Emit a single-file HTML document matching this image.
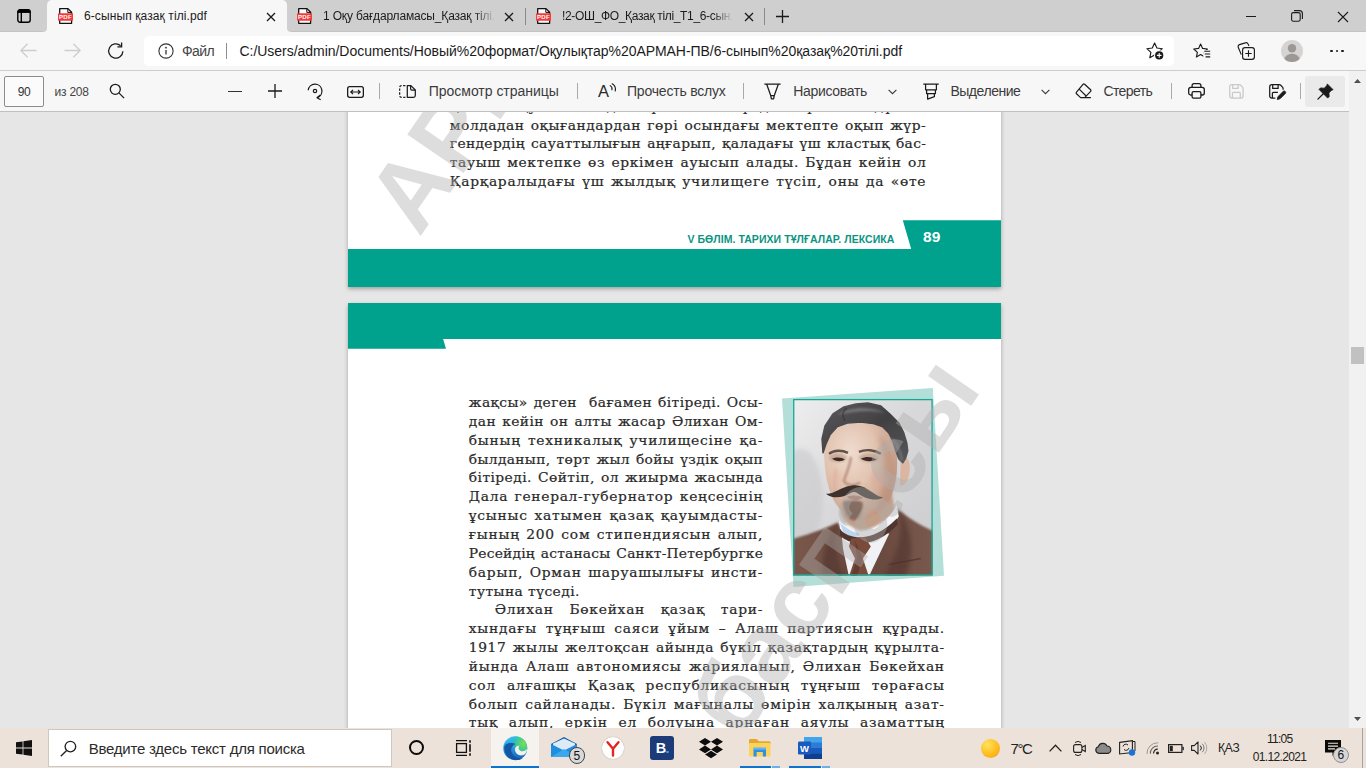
<!DOCTYPE html>
<html lang="kk">
<head>
<meta charset="utf-8">
<title>6-сынып қазақ тілі.pdf</title>
<style>
*{box-sizing:border-box;margin:0;padding:0}
html,body{width:1366px;height:768px;overflow:hidden;background:#e6e6e6}
body{position:relative;font-family:"Liberation Sans","DejaVu Sans",sans-serif;color:#1b1b1b}
.abs{position:absolute}
.t{position:absolute;white-space:nowrap;line-height:1}
svg{position:absolute;overflow:visible}
#tabbar{position:absolute;left:0;top:0;width:1366px;height:32px;background:#cfcfcf}
#tab1{position:absolute;left:47px;top:0;width:240px;height:32px;background:#f7f7f7;border-radius:5px 5px 0 0}
#navbar{position:absolute;left:0;top:32px;width:1366px;height:39px;background:#f7f7f7;border-bottom:1px solid #cdcdcd}
#addr{position:absolute;left:144px;top:4px;width:1030px;height:30px;background:#fff;border-radius:5px}
#pdfbar{position:absolute;left:0;top:71px;width:1349px;height:41px;background:#f7f7f7;border-bottom:1px solid #c0c0c0}
#view{position:absolute;left:0;top:112px;width:1349px;height:616px;background:#e6e6e6;overflow:hidden}
#scroll{position:absolute;left:1349px;top:71px;width:17px;height:657px;background:#f1f1f1}
.page{position:absolute;left:348px;width:653px;background:#fff;overflow:hidden;box-shadow:0 2px 4px rgba(0,0,0,.3)}
.ln{position:absolute;font-family:"DejaVu Serif","Liberation Serif",serif;font-size:13.8px;line-height:1;color:#2a2a2a;text-align:justify;text-align-last:justify;white-space:nowrap;letter-spacing:.45px;-webkit-text-stroke:.22px #2a2a2a}
#task{position:absolute;left:0;top:728px;width:1366px;height:40px;background:#ece2d9}
</style>
</head>
<body>
<div id="tabbar">
<div id="tab1"></div>
<svg style="left:43px;top:28px" width="4" height="4"><path d="M4 0v4H0A4 4 0 0 0 4 0z" fill="#f7f7f7"/></svg>
<svg style="left:287px;top:28px" width="4" height="4"><path d="M0 0v4h4A4 4 0 0 1 0 0z" fill="#f7f7f7"/></svg>
<div class="abs" style="left:0;top:31px;width:43px;height:1px;background:#c4c4c4"></div>
<div class="abs" style="left:291px;top:31px;width:1075px;height:1px;background:#c4c4c4"></div>
<svg style="left:17px;top:9px" width="14" height="14" viewBox="0 0 14 14"><rect x=".8" y=".8" width="12.4" height="12.4" rx="2.3" fill="none" stroke="#000" stroke-width="1.4"/><path d="M.8 3.4V3A2.2 2.2 0 0 1 3 .8H11A2.2 2.2 0 0 1 13.2 3V3.4z" fill="#000" stroke="#000" stroke-width="1"/><path d="M4.3 3v10.4" stroke="#000" stroke-width="1.4"/></svg>
<svg style="left:58px;top:8px" width="15" height="16" viewBox="0 0 15 16"><path d="M1.7 .65h8.3l3.6 3.6v11.1H1.7z" fill="#fff" stroke="#111" stroke-width="1.3" stroke-linejoin="round"/><path d="M9.8 .8v3.6h3.6" fill="none" stroke="#111" stroke-width="1"/><rect x="0" y="5.2" width="15" height="7.5" rx=".8" fill="#f23b3b"/><text x="7.5" y="11.1" font-family="Liberation Sans,sans-serif" font-weight="bold" font-size="6.1" fill="#fff" text-anchor="middle" letter-spacing=".25">PDF</text></svg>
<div class="t" style="left:84.0px;top:9.8px;font-size:12px;letter-spacing:0.101px;">6-сынып қазақ тілі.pdf</div>
<svg style="left:266.5px;top:12.5px" width="8" height="8"><path d="M0 0L8 8M8 0L0 8" stroke="#1b1b1b" stroke-width="1.3" fill="none"/></svg>
<svg style="left:297px;top:8px" width="15" height="16" viewBox="0 0 15 16"><path d="M1.7 .65h8.3l3.6 3.6v11.1H1.7z" fill="#fff" stroke="#111" stroke-width="1.3" stroke-linejoin="round"/><path d="M9.8 .8v3.6h3.6" fill="none" stroke="#111" stroke-width="1"/><rect x="0" y="5.2" width="15" height="7.5" rx=".8" fill="#f23b3b"/><text x="7.5" y="11.1" font-family="Liberation Sans,sans-serif" font-weight="bold" font-size="6.1" fill="#fff" text-anchor="middle" letter-spacing=".25">PDF</text></svg>
<div class="t" style="left:323.0px;top:9.8px;font-size:12px;letter-spacing:-0.163px;padding-bottom:3px;-webkit-mask-image:linear-gradient(90deg,#000 88%,transparent 100%);mask-image:linear-gradient(90deg,#000 88%,transparent 100%);">1 Оқу бағдарламасы_Қазақ тілі.</div>
<svg style="left:505px;top:12.5px" width="8" height="8"><path d="M0 0L8 8M8 0L0 8" stroke="#1b1b1b" stroke-width="1.3" fill="none"/></svg>
<div class="abs" style="left:525px;top:8px;width:1px;height:17px;background:#8a8a8a"></div>
<svg style="left:536px;top:8px" width="15" height="16" viewBox="0 0 15 16"><path d="M1.7 .65h8.3l3.6 3.6v11.1H1.7z" fill="#fff" stroke="#111" stroke-width="1.3" stroke-linejoin="round"/><path d="M9.8 .8v3.6h3.6" fill="none" stroke="#111" stroke-width="1"/><rect x="0" y="5.2" width="15" height="7.5" rx=".8" fill="#f23b3b"/><text x="7.5" y="11.1" font-family="Liberation Sans,sans-serif" font-weight="bold" font-size="6.1" fill="#fff" text-anchor="middle" letter-spacing=".25">PDF</text></svg>
<div class="t" style="left:562.0px;top:9.8px;font-size:12px;letter-spacing:-0.341px;padding-bottom:3px;-webkit-mask-image:linear-gradient(90deg,#000 88%,transparent 100%);mask-image:linear-gradient(90deg,#000 88%,transparent 100%);">!2-ОШ_ФО_Қазақ тілі_Т1_6-сын.</div>
<svg style="left:744.5px;top:12.5px" width="8" height="8"><path d="M0 0L8 8M8 0L0 8" stroke="#1b1b1b" stroke-width="1.3" fill="none"/></svg>
<div class="abs" style="left:764px;top:8px;width:1px;height:17px;background:#8a8a8a"></div>
<svg style="left:776px;top:10px" width="13" height="13"><path d="M6.5 0v13M0 6.5h13" stroke="#1b1b1b" stroke-width="1.3"/></svg>
<div class="abs" style="left:1246px;top:16px;width:10px;height:1px;background:#1b1b1b"></div>
<svg style="left:1291px;top:10px" width="12" height="12" viewBox="0 0 12 12"><rect x=".6" y="2.6" width="8.6" height="8.6" rx="1.6" fill="none" stroke="#1b1b1b" stroke-width="1.1"/><path d="M3 .6h5.4a3 3 0 0 1 3 3V9" fill="none" stroke="#1b1b1b" stroke-width="1.1"/></svg>
<svg style="left:1338px;top:11.5px" width="10" height="10"><path d="M0 0L10 10M10 0L0 10" stroke="#1b1b1b" stroke-width="1.1" fill="none"/></svg>
</div>
<div id="navbar">
<div id="addr"></div>
<svg style="left:20px;top:11px" width="17" height="15" viewBox="0 0 17 15"><path d="M16.5 7.5H1.2M7.6 .8L.9 7.5l6.7 6.7" fill="none" stroke="#cdcdcd" stroke-width="1.3"/></svg>
<svg style="left:63.5px;top:11px" width="17" height="15" viewBox="0 0 17 15"><path d="M.5 7.5H15.8M9.4 .8l6.7 6.7-6.7 6.7" fill="none" stroke="#cdcdcd" stroke-width="1.3"/></svg>
<svg style="left:107px;top:10px" width="18" height="18" viewBox="0 0 18 18"><path d="M15.9 9.2A7.1 7.1 0 1 1 13.6 3.7" fill="none" stroke="#1b1b1b" stroke-width="1.3"/><path d="M14.6 .6v4.2h-4.2" fill="none" stroke="#1b1b1b" stroke-width="1.3"/></svg>
<svg style="left:158px;top:11px" width="16" height="16" viewBox="0 0 16 16"><circle cx="8" cy="8" r="7.1" fill="none" stroke="#333" stroke-width="1.1"/><path d="M8 7v4.6" stroke="#333" stroke-width="1.3"/><circle cx="8" cy="4.7" r=".9" fill="#333"/></svg>
<div class="t" style="left:182.0px;top:12.1px;font-size:14px;color:#444;letter-spacing:-0.605px;">Файл</div>
<div class="abs" style="left:226px;top:11px;width:1px;height:16px;background:#8d8d8d"></div>
<div class="t" style="left:239.5px;top:12.1px;font-size:14px;letter-spacing:-0.034px;">C:/Users/admin/Documents/Новый%20формат/Оқулықтар%20АРМАН-ПВ/6-сынып%20қазақ%20тілі.pdf</div>
<svg style="left:1145.5px;top:10.2px" width="19" height="19" viewBox="0 0 19 19"><path d="M8.6 1.1L10.9 6L16.3 6.7L12.3 10.4L13.4 15.8L8.6 13.1L3.8 15.8L4.9 10.4L.9 6.7L6.3 6z" fill="none" stroke="#1b1b1b" stroke-width="1.15" stroke-linejoin="round"/><circle cx="13.2" cy="13.4" r="5.1" fill="#fff"/><circle cx="13.2" cy="13.4" r="4.1" fill="#1b1b1b"/><path d="M13.2 11.1v4.6M10.9 13.4h4.6" stroke="#fff" stroke-width="1.1"/></svg>
<svg style="left:1193px;top:10.2px" width="19" height="19" viewBox="0 0 19 19"><path d="M7.6 2L9.6 6.4L14.4 7L10.8 10.3L11.8 15L7.6 12.6L3.4 15L4.4 10.3L.8 7L5.6 6.4z" fill="none" stroke="#1b1b1b" stroke-width="1.15" stroke-linejoin="round"/><rect x="10.2" y="8.1" width="8" height="8.5" fill="#f7f7f7"/><path d="M11.3 9.2h5.9M11.8 12h5.4M12.6 14.8h4.6" stroke="#1b1b1b" stroke-width="1.15"/></svg>
<svg style="left:1237px;top:10px" width="19" height="19" viewBox="0 0 19 19"><rect x="5.6" y="5.6" width="11.8" height="11.8" rx="2.4" fill="#f7f7f7" stroke="#1b1b1b" stroke-width="1.15"/><path d="M11.5 8.3v6.4M8.3 11.5h6.4" stroke="#1b1b1b" stroke-width="1.15"/><path d="M4.3 12.6L1.3 5.5a2.2 2.2 0 0 1 1.2-2.9L8.3 .9a2.2 2.2 0 0 1 2.8 1.2l.9 2" fill="none" stroke="#1b1b1b" stroke-width="1.15"/></svg>
<svg style="left:1281px;top:8px" width="22" height="22" viewBox="0 0 22 22"><defs><clipPath id="pc"><circle cx="11" cy="11" r="11"/></clipPath></defs><circle cx="11" cy="11" r="11" fill="#d6d4d2"/><g clip-path="url(#pc)"><circle cx="11" cy="8.3" r="4.2" fill="#9b9896"/><ellipse cx="11" cy="20.5" rx="8" ry="6.8" fill="#9b9896"/></g></svg>
<div class="abs" style="left:1330.3px;top:18px;width:2.4px;height:2.4px;border-radius:50%;background:#1b1b1b"></div>
<div class="abs" style="left:1335.8px;top:18px;width:2.4px;height:2.4px;border-radius:50%;background:#1b1b1b"></div>
<div class="abs" style="left:1341.3px;top:18px;width:2.4px;height:2.4px;border-radius:50%;background:#1b1b1b"></div>
</div>
<div id="pdfbar">
<div class="abs" style="left:4px;top:4.5px;width:40px;height:31px;border:1px solid #8c8c8c;border-radius:2px;background:#fbfbfb"></div>
<div class="t" style="left:17.8px;top:14.8px;font-size:12px;color:#333;letter-spacing:-0.380px;">90</div>
<div class="t" style="left:54.5px;top:14.8px;font-size:12px;color:#444;letter-spacing:-0.210px;">из 208</div>
<svg style="left:109px;top:12px" width="16" height="16" viewBox="0 0 16 16"><circle cx="6.3" cy="6.3" r="5" fill="none" stroke="#1b1b1b" stroke-width="1.3"/><path d="M9.9 9.9l5.2 5.2" stroke="#1b1b1b" stroke-width="1.3"/></svg>
<div class="abs" style="left:228px;top:19.5px;width:14px;height:1px;background:#333"></div>
<svg style="left:268px;top:13px" width="14" height="14"><path d="M7 0v14M0 7h14" stroke="#1b1b1b" stroke-width="1.3"/></svg>
<svg style="left:306px;top:11px" width="18" height="18" viewBox="0 0 18 18"><path d="M2.2 8.3A6.9 6.9 0 1 1 11.2 15.6" fill="none" stroke="#1b1b1b" stroke-width="1.25"/><path d="M14.4 13l-3.4 2.8 3.7 1.9" fill="none" stroke="#1b1b1b" stroke-width="1.25" stroke-linejoin="round"/><circle cx="9" cy="9" r="1.7" fill="none" stroke="#1b1b1b" stroke-width="1.2"/></svg>
<svg style="left:346.5px;top:14.5px" width="17" height="12" viewBox="0 0 17 12"><rect x=".65" y=".65" width="15.7" height="10.7" rx="2" fill="none" stroke="#1b1b1b" stroke-width="1.3"/><path d="M4 6h9M6 3.8L3.8 6 6 8.2M11 3.8L13.2 6 11 8.2" fill="none" stroke="#1b1b1b" stroke-width="1.2"/></svg>
<div class="abs" style="left:379px;top:12px;width:1px;height:16px;background:#a8a8a8"></div>
<svg style="left:399px;top:13.5px" width="17" height="13" viewBox="0 0 17 13"><path d="M8.3 .65h3.6l4.4 4.4v5.5a1.8 1.8 0 0 1-1.8 1.8H8.3z" fill="none" stroke="#1b1b1b" stroke-width="1.25" stroke-linejoin="round"/><path d="M11.6 .8v3a1.3 1.3 0 0 0 1.3 1.3h3.2" fill="none" stroke="#1b1b1b" stroke-width="1.2"/><path d="M6.4 .65H2.4A1.75 1.75 0 0 0 .65 2.4v8.2a1.75 1.75 0 0 0 1.75 1.75h4" fill="none" stroke="#1b1b1b" stroke-width="1.25" stroke-dasharray="2.3 1.5"/></svg>
<div class="t" style="left:428.8px;top:13.1px;font-size:14px;color:#3b3b3b;letter-spacing:-0.027px;">Просмотр страницы</div>
<div class="abs" style="left:577px;top:12px;width:1px;height:16px;background:#a8a8a8"></div>
<div class="t" style="left:598.0px;top:11.5px;font-size:16.5px;color:#2a2a2a;">A</div>
<svg style="left:608.5px;top:12px" width="8" height="9" viewBox="0 0 8 9"><path d="M1.2 2.6a3.8 3.8 0 0 1 1.7 4.2M3.2 .8a6.6 6.6 0 0 1 3 7.2" fill="none" stroke="#1b1b1b" stroke-width="1.1" stroke-linecap="round"/></svg>
<div class="t" style="left:627.0px;top:13.1px;font-size:14px;color:#3b3b3b;letter-spacing:-0.204px;">Прочесть вслух</div>
<div class="abs" style="left:743px;top:12px;width:1px;height:16px;background:#a8a8a8"></div>
<svg style="left:763.5px;top:11.5px" width="17" height="17" viewBox="0 0 17 17"><path d="M.8 1h15.4M2.7 1.2l4 11.3h3.6l4-11.3M6.7 12.5l.7 3.3h2.2l.7-3.3" fill="none" stroke="#1b1b1b" stroke-width="1.25" stroke-linejoin="round" stroke-linecap="round"/></svg>
<div class="t" style="left:793.2px;top:13.1px;font-size:14px;color:#3b3b3b;letter-spacing:-0.312px;">Нарисовать</div>
<svg style="left:888px;top:17.5px" width="9" height="6" viewBox="0 0 9 6"><path d="M.6 .8l3.9 3.9L8.4 .8" fill="none" stroke="#3b3b3b" stroke-width="1.1"/></svg>
<svg style="left:922.5px;top:11.5px" width="16" height="17" viewBox="0 0 16 17"><path d="M.7 1h14.6M2.6 1.2v5.6h10.8V1.2M3.6 6.8v3.7h8.8V6.8M4.6 10.5v5.6l6.8-2.4v-3.2" fill="none" stroke="#1b1b1b" stroke-width="1.25" stroke-linejoin="round" stroke-linecap="round"/></svg>
<div class="t" style="left:950.4px;top:13.1px;font-size:14px;color:#3b3b3b;letter-spacing:-0.465px;">Выделение</div>
<svg style="left:1040.5px;top:17.5px" width="9" height="6" viewBox="0 0 9 6"><path d="M.6 .8l3.9 3.9L8.4 .8" fill="none" stroke="#3b3b3b" stroke-width="1.1"/></svg>
<svg style="left:1074.5px;top:12px" width="17" height="16" viewBox="0 0 17 16"><path d="M9.6 1.3l6 5.5a1.1 1.1 0 0 1 0 1.6l-5.9 6.2H5.6L1.5 10.8a1.1 1.1 0 0 1 0-1.6L8 1.3a1.1 1.1 0 0 1 1.6 0zM4.2 6.1l6.7 6.6M9.7 14.6h5.8" fill="none" stroke="#1b1b1b" stroke-width="1.2" stroke-linejoin="round" stroke-linecap="round"/></svg>
<div class="t" style="left:1103.5px;top:13.1px;font-size:14px;color:#3b3b3b;letter-spacing:-0.624px;">Стереть</div>
<div class="abs" style="left:1171px;top:12px;width:1px;height:16px;background:#a8a8a8"></div>
<svg style="left:1188px;top:12px" width="17" height="16" viewBox="0 0 17 16"><path d="M4.1 4.3V2.4A1.7 1.7 0 0 1 5.8 .7h5.4a1.7 1.7 0 0 1 1.7 1.7v1.9" fill="none" stroke="#1b1b1b" stroke-width="1.3"/><path d="M4.1 12H2.7A2 2 0 0 1 .7 10V6.5a2.2 2.2 0 0 1 2.2-2.2h11.2a2.2 2.2 0 0 1 2.2 2.2V10a2 2 0 0 1-2 2h-1.4" fill="none" stroke="#1b1b1b" stroke-width="1.3"/><rect x="4.1" y="8.6" width="8.8" height="6.6" rx="1.4" fill="none" stroke="#1b1b1b" stroke-width="1.3"/></svg>
<svg style="left:1228.5px;top:12.5px" width="15" height="15" viewBox="0 0 15 15"><path d="M.7 2.7A2 2 0 0 1 2.7 .7h7.6a2 2 0 0 1 1.4 .6l1.8 1.8a2 2 0 0 1 .6 1.4v7.6a2 2 0 0 1-2 2H2.7a2 2 0 0 1-2-2z" fill="none" stroke="#c9c9c9" stroke-width="1.25"/><path d="M3.7 .9v3.4h5.4V.9M3.4 14V9.3a1 1 0 0 1 1-1h5.9a1 1 0 0 1 1 1V14" fill="none" stroke="#c9c9c9" stroke-width="1.25"/></svg>
<svg style="left:1268.5px;top:12.5px" width="17" height="16" viewBox="0 0 17 16"><path d="M6.3 14.1H2.7a2 2 0 0 1-2-2V2.7A2 2 0 0 1 2.7 .7h7.6a2 2 0 0 1 1.4 .6l1.8 1.8a2 2 0 0 1 .6 1.4v1.3" fill="none" stroke="#1b1b1b" stroke-width="1.25"/><path d="M3.7 .9v3.4h5.4V.9M3.4 14V9.3a1 1 0 0 1 1-1h4.5" fill="none" stroke="#1b1b1b" stroke-width="1.25"/><path d="M8.2 15.5l.7-2.8 5.4-5.4a1.5 1.5 0 0 1 2.1 2.1l-5.4 5.4z" fill="#1b1b1b" stroke="#1b1b1b" stroke-width=".8" stroke-linejoin="round"/></svg>
<div class="abs" style="left:1300px;top:12px;width:1px;height:16px;background:#a8a8a8"></div>
<div class="abs" style="left:1305px;top:4.5px;width:40px;height:31px;border-radius:3px;background:#eaeaea"></div>
<svg style="left:1317px;top:11.5px" width="17" height="17" viewBox="0 0 17 17"><path d="M10.3 .9l5.8 5.8-1.5 .5-2.7 2.7.3 3.7-1.5 1.5L2 6.4l1.5-1.5 3.7.3L9.9 2.5z" fill="#1b1b1b" stroke="#1b1b1b" stroke-width=".8" stroke-linejoin="round"/><path d="M6.3 10.7L.9 16.1" stroke="#1b1b1b" stroke-width="1.3" stroke-linecap="round"/></svg>
</div>
<div id="view">
<div class="page" style="top:-784px;height:959px">
<div class="ln" style="left:101.8px;top:771.73px;width:476.5px;letter-spacing:0.75px;">қалаға оқуға әкеледі. Зерек бала мұнда жергілікті дүмше</div>
<div class="ln" style="left:101.8px;top:790.53px;width:476.5px;letter-spacing:0.54px;">молдадан оқығандардан гөрі осындағы мектепте оқып жүр-</div>
<div class="ln" style="left:101.8px;top:809.33px;width:476.5px;letter-spacing:0.37px;">гендердің сауаттылығын аңғарып, қаладағы үш кластық бас-</div>
<div class="ln" style="left:101.8px;top:828.13px;width:476.5px;letter-spacing:0.65px;">тауыш мектепке өз еркімен ауысып алады. Бұдан кейін ол</div>
<div class="ln" style="left:101.8px;top:846.93px;width:476.5px;letter-spacing:0.75px;">Қарқаралыдағы үш жылдық училищеге түсіп, оны да «өте</div>
<svg style="left:0;top:892px" width="653" height="67" viewBox="0 0 653 67"><path d="M0 29H563.2L554.800 .2H653V67H0z" fill="#00a18d"/></svg>
<div class="t" style="left:339.4px;top:906.3px;font-size:10.5px;color:#0a9583;font-weight:bold;letter-spacing:0.057px;">V БӨЛІМ. ТАРИХИ ТҰЛҒАЛАР. ЛЕКСИКА</div>
<div class="t" style="left:575.0px;top:901.1px;font-size:15.5px;color:#fff;font-weight:bold;letter-spacing:0.075px;">89</div>
<div class="t wm" style="left:71.3px;top:825.7px;font-size:99px;font-weight:bold;color:rgba(175,175,175,.42);transform-origin:0 83.8px;transform:rotate(-55.6deg);letter-spacing:.47px;">АРМАН-ПВ баспасы</div>
</div>
<div class="page" style="top:191px;height:959px">
<svg style="left:0;top:0" width="653" height="46" viewBox="0 0 653 46"><path d="M0 0H653V36H95.1L98 45.7H0z" fill="#00a18d"/></svg>
<svg style="left:0;top:0" width="653" height="320"><path d="M434 95.6L584.800 85 596 272.8 445.500 284z" fill="#b3dfd8"/></svg>
<svg style="left:445.2px;top:96.4px" width="139.8" height="176.4" viewBox="0 0 140 177">
<defs><linearGradient id="bg" x1="0" y1="0" x2="1" y2="1"><stop offset="0" stop-color="#eeeeef"/><stop offset=".45" stop-color="#d9d9db"/><stop offset="1" stop-color="#cbcbce"/></linearGradient><radialGradient id="fc" cx=".36" cy=".34" r=".75"><stop offset="0" stop-color="#f0dccf"/><stop offset=".45" stop-color="#e2c4b1"/><stop offset=".8" stop-color="#cba590"/><stop offset="1" stop-color="#b98f7b"/></radialGradient><linearGradient id="hr" x1="0" y1="0" x2="1" y2="1"><stop offset="0" stop-color="#5b5a5c"/><stop offset=".5" stop-color="#414042"/><stop offset="1" stop-color="#57575a"/></linearGradient><linearGradient id="st" x1="0" y1="0" x2="1" y2="0"><stop offset="0" stop-color="#7b594c"/><stop offset=".5" stop-color="#65453a"/><stop offset="1" stop-color="#7a5a4e"/></linearGradient><filter id="b1" x="-20%" y="-20%" width="140%" height="140%"><feGaussianBlur stdDeviation="2"/></filter><filter id="b2" x="-20%" y="-20%" width="140%" height="140%"><feGaussianBlur stdDeviation="1"/></filter><filter id="b3" x="-20%" y="-20%" width="140%" height="140%"><feGaussianBlur stdDeviation=".6"/></filter><clipPath id="ph"><rect x="0" y="0" width="140" height="177"/></clipPath></defs>
<g clip-path="url(#ph)">
<rect width="140" height="177" fill="url(#bg)"/>
<ellipse cx="8" cy="100" rx="22" ry="50" fill="#c9c9cc" opacity=".6" filter="url(#b1)"/>
<path d="M-2 180V141C12 137 30 131 45 124L58 150 72 176 88 140 104 110C114 118 128 128 142 133V180z" fill="url(#st)" filter="url(#b2)"/>
<path d="M45 124C40 138 42 158 52 180H30C28 160 32 140 45 124zM104 110C112 126 108 152 90 180H112C122 158 120 128 104 110z" fill="#553830" opacity=".7" filter="url(#b1)"/>
<path d="M96 166L128 160" stroke="#4d332b" stroke-width="1.6" opacity=".7" filter="url(#b3)"/>
<path d="M48 128L92 122 96 136 76 178H56L50 150z" fill="#f1f2f5" filter="url(#b3)"/>
<path d="M50 96L98 90 102 112C92 124 78 132 68 132 58 130 50 122 48 114z" fill="#c39f8a" filter="url(#b2)"/>
<path d="M46 122C52 128 60 133 68 134 82 132 96 122 104 106L106 118C98 132 84 142 70 143 60 142 52 136 47 130z" fill="#f3f5f9" filter="url(#b3)"/>
<path d="M47 124C53 130 60 134 67 135L62 141 50 133z" fill="#bcd6ee" filter="url(#b3)"/>
<path d="M47 131C58 142 80 144 104 120L105 126C82 150 58 148 47 137z" fill="#4f352d" filter="url(#b3)"/>
<path d="M58 140L72 139 78 148 70 160 76 178H56L62 160 56 148z" fill="#7a4b3b" filter="url(#b3)"/>
<path d="M62 142L70 160 64 178H58L64 160z" fill="#5c362b" opacity=".7" filter="url(#b3)"/>
<path d="M108 60C114 56 118 62 117 72 116 82 112 88 107 87z" fill="#dbb7a3" filter="url(#b3)"/>
<path d="M31 50C31 34 42 22 62 20 84 18 100 28 103 48 106 66 104 84 98 98 92 110 80 120 66 122 56 122 44 110 38 96 33 82 31 66 31 50z" fill="url(#fc)" filter="url(#b3)"/>
<path d="M86 36C98 44 104 62 102 82 100 96 92 110 82 117 90 98 94 66 86 36z" fill="#b88c77" opacity=".55" filter="url(#b1)"/>
<path d="M30 54L29 40 32 27 40 15 51 8 63 5 75 4 88 7 97 15 106 24 111 34 114 44 115 52 113 59 110 64 106 60 103 52 100 42 96 34 90 28 80 24.5 68 23 55 24 44 28 37 36 33 45 31 51z" fill="url(#hr)" stroke="url(#hr)" stroke-width="1.5" stroke-linejoin="round" filter="url(#b3)"/>
<path d="M44 16C56 8 76 6 92 14 80 11 60 12 44 16z" fill="#8d8d90" opacity=".6" filter="url(#b2)"/>
<path d="M99 40C105 46 108 54 109 62" stroke="#7d7d80" stroke-width="3" fill="none" opacity=".6" filter="url(#b2)"/>
<path d="M52 22C48 16 50 12 54 9" stroke="#2c2c2e" stroke-width="1.2" fill="none" opacity=".6" filter="url(#b3)"/>
<ellipse cx="45" cy="59" rx="9" ry="4.5" fill="#b58f7c" opacity=".55" filter="url(#b2)"/><ellipse cx="76" cy="59" rx="10" ry="4.5" fill="#b58f7c" opacity=".55" filter="url(#b2)"/>
<ellipse cx="42" cy="80" rx="7" ry="8" fill="#e7b7a6" opacity=".5" filter="url(#b1)"/><ellipse cx="86" cy="80" rx="8" ry="9" fill="#dba794" opacity=".45" filter="url(#b1)"/>
<path d="M36 55C41 51 49 51 55 54M66 53C73 50 82 51 88 55" stroke="#4a3a34" stroke-width="2.4" fill="none" opacity=".85" filter="url(#b3)"/>
<path d="M39 60C43 58 49 58 52 61 48 63 43 63 39 60zM68 60C73 57 80 58 84 61 79 63 72 63 68 60z" fill="#3a2c28" filter="url(#b3)"/>
<path d="M58 58C57 68 52 78 51 82 53 87 62 88 67 84" stroke="#b48a75" stroke-width="2.2" fill="none" filter="url(#b2)"/>
<path d="M44 70C40 80 40 90 44 98" stroke="#d2ad98" stroke-width="4" fill="none" opacity=".5" filter="url(#b1)"/>
<path d="M33 95C40 96 48 88 58 87 62 86 64 87 66 87 74 88 80 96 90 99 82 103 72 100 64 94 62 93 60 93 58 94 50 99 40 101 33 95z" fill="#3e312d" filter="url(#b3)"/>
<path d="M54 98C60 96 66 97 70 99 66 102 58 102 54 98z" fill="#b07a6c" filter="url(#b3)"/>
<path d="M50 103C56 101 66 101 70 104 70 114 66 122 60 122 54 120 50 112 50 103z" fill="#77625a" opacity=".85" filter="url(#b2)"/>
</g>
<rect x=".6" y=".6" width="138.8" height="175.8" fill="none" stroke="#17a594" stroke-width="1.3"/>
</svg>
<div class="ln" style="left:120.8px;top:93.03px;width:294.3px;letter-spacing:0.40px;">жақсы» деген&nbsp; бағамен бітіреді. Осы-</div>
<div class="ln" style="left:120.8px;top:111.88px;width:294.3px;letter-spacing:0.43px;">дан кейін он алты жасар Әлихан Ом-</div>
<div class="ln" style="left:120.8px;top:130.73px;width:294.3px;letter-spacing:0.75px;">бының техникалық училищесіне қа-</div>
<div class="ln" style="left:120.8px;top:149.58px;width:294.3px;letter-spacing:0.35px;">былданып, төрт жыл бойы үздік оқып</div>
<div class="ln" style="left:120.8px;top:168.43px;width:294.3px;letter-spacing:0.44px;">бітіреді. Сөйтіп, ол жиырма жасында</div>
<div class="ln" style="left:120.8px;top:187.28px;width:294.3px;letter-spacing:0.71px;">Дала генерал-губернатор кеңсесінің</div>
<div class="ln" style="left:120.8px;top:206.13px;width:294.3px;letter-spacing:0.75px;">ұсыныс хатымен қазақ қауымдасты-</div>
<div class="ln" style="left:120.8px;top:224.98px;width:294.3px;letter-spacing:0.75px;">ғының 200 сом стипендиясын алып,</div>
<div class="ln" style="left:120.8px;top:243.83px;width:294.3px;letter-spacing:0.22px;">Ресейдің астанасы Санкт-Петербургке</div>
<div class="ln" style="left:120.8px;top:262.68px;width:294.3px;letter-spacing:0.75px;">барып, Орман шаруашылығы инсти-</div>
<div class="ln" style="left:120.8px;top:281.53px;width:294.3px;letter-spacing:0.45px;text-align-last:left;">тутына түседі.</div>
<div class="ln" style="left:146.8px;top:300.38px;width:268.3px;letter-spacing:0.75px;">Әлихан Бөкейхан қазақ тари-</div>
<div class="ln" style="left:120.8px;top:319.23px;width:476.0px;letter-spacing:0.75px;">хындағы тұңғыш саяси ұйым – Алаш партиясын құрады.</div>
<div class="ln" style="left:120.8px;top:338.08px;width:476.0px;letter-spacing:0.62px;">1917 жылы желтоқсан айында бүкіл қазақтардың құрылта-</div>
<div class="ln" style="left:120.8px;top:356.93px;width:476.0px;letter-spacing:0.75px;">йында Алаш автономиясы жарияланып, Әлихан Бөкейхан</div>
<div class="ln" style="left:120.8px;top:375.78px;width:476.0px;letter-spacing:0.75px;">сол алғашқы Қазақ республикасының тұңғыш төрағасы</div>
<div class="ln" style="left:120.8px;top:394.63px;width:476.0px;letter-spacing:0.75px;">болып сайланады. Бүкіл мағыналы өмірін халқының азат-</div>
<div class="ln" style="left:120.8px;top:413.48px;width:476.0px;letter-spacing:0.75px;">тық алып, еркін ел болуына арнаған аяулы азаматтың</div>
<div class="ln" style="left:120.8px;top:432.33px;width:476.0px;letter-spacing:0.75px;">есімі ел жадында мәңгі сақталады. Оның артында қалған</div>
<div class="t wm" style="left:71.3px;top:825.1px;font-size:99px;font-weight:bold;color:rgba(175,175,175,.42);transform-origin:0 83.8px;transform:rotate(-55.6deg);letter-spacing:.47px;">АРМАН-ПВ баспасы</div>
</div>
</div>
<div id="scroll">
<svg style="left:5px;top:7.5px" width="7" height="4"><path d="M0 4L3.5 0 7 4z" fill="#505050"/></svg>
<div class="abs" style="left:2px;top:276px;width:13px;height:17px;background:#c1c1c1"></div>
<svg style="left:5px;top:646px" width="7" height="4"><path d="M0 0L3.5 4 7 0z" fill="#505050"/></svg>
</div>
<div id="task">
<svg style="left:16px;top:12px" width="16" height="16" viewBox="0 0 16 16"><path d="M0 2.3L6.6 1.4V7.6H0zM7.4 1.3L16 0V7.6H7.4zM0 8.4H6.6V14.6L0 13.7zM7.4 8.4H16V16L7.4 14.7z" fill="#111"/></svg>
<div class="abs" style="left:48px;top:1px;width:343.5px;height:38px;background:#fff;border:1px solid #cfc8c0"></div>
<svg style="left:60px;top:12px" width="17" height="17" viewBox="0 0 17 17"><circle cx="10.4" cy="6.6" r="5.3" fill="none" stroke="#222" stroke-width="1.35"/><path d="M6.6 10.4L.8 16.2" stroke="#222" stroke-width="1.35"/></svg>
<div class="t" style="left:88.7px;top:12.9px;font-size:15px;color:#2b2b2b;letter-spacing:-0.233px;">Введите здесь текст для поиска</div>
<div class="abs" style="left:408.5px;top:12.4px;width:15px;height:15px;border-radius:50%;border:2.5px solid #0a0a0a"></div>
<svg style="left:455px;top:12px" width="18" height="16" viewBox="0 0 18 16"><rect x="1.6" y="3.6" width="9.8" height="8.8" fill="none" stroke="#111" stroke-width="1.3"/><path d="M1 .7h11M1 15.3h11" stroke="#111" stroke-width="1.3"/><path d="M15 .2v2.6M15 4.2v7.6M15 13.2v2.6" stroke="#111" stroke-width="1.6"/></svg>
<div class="abs" style="left:490.5px;top:0;width:48.5px;height:40px;background:rgba(255,255,255,.55)"></div>
<div class="abs" style="left:490.5px;top:38px;width:48.5px;height:2px;background:#0b74d1"></div>
<svg style="left:502.5px;top:7.5px" width="24.5" height="24.5" viewBox="0 0 26 26"><defs><linearGradient id="eg1" x1=".2" y1="0" x2=".6" y2="1"><stop offset="0" stop-color="#3ccbf4"/><stop offset=".45" stop-color="#2391dc"/><stop offset="1" stop-color="#1767bd"/></linearGradient><radialGradient id="eg2" cx=".85" cy=".3" r=".55"><stop offset="0" stop-color="#7be04f"/><stop offset=".55" stop-color="#3fcf8e" stop-opacity=".9"/><stop offset="1" stop-color="#2fb6d8" stop-opacity="0"/></radialGradient></defs><circle cx="13" cy="13" r="12.7" fill="url(#eg1)"/><circle cx="13" cy="13" r="12.7" fill="url(#eg2)"/><path d="M1.5 11C.5 18 5.5 25 13.5 25.5 16.5 25.6 19 24.8 21 23.5 15.5 24.5 10.5 21.5 9 17 7.8 13 10 9.5 13.5 8.5 9 6.5 3 7.5 1.5 11z" fill="#13529f" opacity=".92"/><path d="M12.8 14.8C12.5 12 14.5 10 17.2 10.3 16 12 16.3 14.8 18.8 15.8 21.5 16.8 24.5 15.3 25.6 13.5 25.5 17 23.5 20 20.5 20.5 16.5 21 13.2 18.5 12.8 14.8z" fill="#f5f1ee"/></svg>
<svg style="left:551px;top:9px" width="26" height="20" viewBox="0 0 26 20"><path d="M0 7L13 0 26 7V19.5H0z" fill="#0f5ea8"/><path d="M2 6.5L13 1.5 24 6.5V14H2z" fill="#dcebf7"/><path d="M0 7L13 13.5 26 7V20H0z" fill="#1e8fdf"/><path d="M0 20L13 12 26 20z" fill="#3aa7ee"/></svg>
<div class="abs" style="left:568.5px;top:19px;width:16.5px;height:16.5px;border-radius:50%;background:#d9d9d9;border:1px solid #444"></div>
<div class="t" style="left:573.5px;top:21.8px;font-size:12px;color:#111;">5</div>
<div class="abs" style="left:602px;top:9px;width:22px;height:22px;border-radius:50%;background:#fff;box-shadow:0 0 1px rgba(0,0,0,.4)"></div>
<svg style="left:602px;top:9px" width="22" height="22" viewBox="0 0 23 23"><path d="M5.8 5.5L11.5 12.3V19.3M17.2 5.5L11.5 12.3" fill="none" stroke="#e52620" stroke-width="2.5" stroke-linecap="round" stroke-linejoin="round"/></svg>
<div class="abs" style="left:650px;top:8.3px;width:24px;height:23.5px;border-radius:3px;background:#1d3b78"></div>
<div class="t" style="left:655.8px;top:13.0px;font-size:14.5px;color:#fff;font-weight:bold;">B</div>
<div class="abs" style="left:666px;top:22.8px;width:2.6px;height:2.6px;border-radius:50%;background:#27a8e6"></div>
<svg style="left:699px;top:9.5px" width="24" height="22" viewBox="0 0 24 22"><path d="M6 0L12 3.8 6 7.6 0 3.8zM18 0L24 3.8 18 7.6 12 3.8zM0 11.4L6 7.6 12 11.4 6 15.2zM18 7.6L24 11.4 18 15.2 12 11.4zM6 16.5L12 12.7 18 16.5 12 20.3z" fill="#0d0d0d"/></svg>
<svg style="left:749px;top:10.5px" width="21.5" height="17.9" viewBox="0 0 24 20"><path d="M0 1.5A1.5 1.5 0 0 1 1.5 0H8.5L11 2.5H22.5A1.5 1.5 0 0 1 24 4V6H0z" fill="#e3a92c"/><rect x="0" y="4.5" width="24" height="15" rx="1" fill="#fbd35c"/><path d="M5 19.5V11H19V19.5H15.5V14.5H8.5V19.5z" fill="#2f8fe0"/><rect x="5" y="9.5" width="14" height="2.5" fill="#5fb4f2"/></svg>
<div class="abs" style="left:740px;top:38px;width:31px;height:2px;background:#0b74d1"></div>
<div class="abs" style="left:771.5px;top:38px;width:8px;height:2px;background:#6fb0ea"></div>
<svg style="left:797.5px;top:9px" width="24" height="22" viewBox="0 0 24 22"><rect x="6" y="0" width="18" height="22" rx="1.5" fill="#2b7cd3"/><rect x="6" y="0" width="18" height="5.5" fill="#41a5ee"/><rect x="6" y="11" width="18" height="5.5" fill="#185abd"/><rect x="6" y="16.5" width="18" height="5.5" fill="#103f91"/><rect x="0" y="4.5" width="13" height="13" rx="1.2" fill="#185abd"/><text x="6.5" y="14.5" font-family="Liberation Sans,sans-serif" font-weight="bold" font-size="9.5" fill="#fff" text-anchor="middle">W</text></svg>
<div class="abs" style="left:789px;top:38px;width:32px;height:2px;background:#0b74d1"></div>
<div class="abs" style="left:821.5px;top:38px;width:8px;height:2px;background:#6fb0ea"></div>
<div class="abs" style="left:980.5px;top:10.5px;width:19px;height:19px;border-radius:50%;background:radial-gradient(circle at 35% 30%,#ffe45a,#ffb81c 60%,#f99b0e)"></div>
<div class="t" style="left:1010.5px;top:13.0px;font-size:15px;color:#222;letter-spacing:-1.396px;">7°C</div>
<svg style="left:1048.5px;top:16.3px" width="13" height="8" viewBox="0 0 13 8"><path d="M.6 7.4L6.5 1.3 12.4 7.4" fill="none" stroke="#222" stroke-width="1.3"/></svg>
<svg style="left:1073px;top:11.8px" width="13" height="17" viewBox="0 0 13 17"><rect x=".6" y="4.6" width="8.3" height="7.8" rx="2" fill="none" stroke="#222" stroke-width="1.1"/><path d="M8.9 7.5L12.3 5.5V11.5L8.9 9.5" fill="none" stroke="#222" stroke-width="1.1"/><path d="M2 2.5A5 5 0 0 1 8 2.5M2 14.5A5 5 0 0 0 8 14.5" fill="none" stroke="#222" stroke-width="1"/></svg>
<svg style="left:1095px;top:14.5px" width="17" height="11" viewBox="0 0 17 11"><path d="M4 10.4A3.4 3.4 0 0 1 3.4 3.7 4.6 4.6 0 0 1 12 3 3.8 3.8 0 0 1 13.2 10.4z" fill="#8b8b8b" stroke="#222" stroke-width="1.1"/></svg>
<svg style="left:1119px;top:11.5px" width="17" height="16" viewBox="0 0 17 16"><path d="M.6 2.4L13.4 .6V12.6L.6 14z" fill="none" stroke="#222" stroke-width="1.1"/><path d="M13.4 1.5H16V11" fill="none" stroke="#222" stroke-width="1"/><path d="M4 6.5A3 3 0 0 1 9 5M10 8A3 3 0 0 1 5 9.5" fill="none" stroke="#222" stroke-width="1"/><circle cx="13" cy="12.5" r="3.2" fill="#1a73d9"/></svg>
<svg style="left:1145.5px;top:14px" width="14" height="13" viewBox="0 0 14 13"><circle cx="11.5" cy="11" r="1.5" fill="#222"/><path d="M7.6 11.5A4 4 0 0 1 11.8 7.2" fill="none" stroke="#222" stroke-width="1.2"/><path d="M4.4 11.8A7.3 7.3 0 0 1 12 4" fill="none" stroke="#666" stroke-width="1.1"/><path d="M1 12A10.6 10.6 0 0 1 12.2 .8" fill="none" stroke="#999" stroke-width="1"/></svg>
<svg style="left:1167.5px;top:16px" width="16" height="9" viewBox="0 0 16 9"><rect x=".6" y=".6" width="13.3" height="7.8" fill="none" stroke="#222" stroke-width="1.2"/><rect x="14.4" y="2.8" width="1.4" height="3.4" fill="#222"/><rect x="1.8" y="1.8" width="3" height="5.4" fill="#222"/></svg>
<svg style="left:1191px;top:13px" width="17" height="14" viewBox="0 0 17 14"><path d="M.6 4.6H3.2L7 1V13L3.2 9.4H.6z" fill="none" stroke="#222" stroke-width="1.1" stroke-linejoin="round"/><path d="M9.3 4.6A3.4 3.4 0 0 1 9.3 9.4" fill="none" stroke="#222" stroke-width="1"/><path d="M11.3 2.8A6 6 0 0 1 11.3 11.2" fill="none" stroke="#777" stroke-width="1"/><path d="M13.4 1A8.6 8.6 0 0 1 13.4 13" fill="none" stroke="#aaa" stroke-width="1"/></svg>
<div class="t" style="left:1218.0px;top:14.0px;font-size:12px;color:#222;letter-spacing:-0.236px;">ҚАЗ</div>
<div class="t" style="left:1267.0px;top:5.1px;font-size:12px;color:#222;letter-spacing:-0.768px;">11:05</div>
<div class="t" style="left:1252.8px;top:23.0px;font-size:12px;color:#222;letter-spacing:-0.656px;">01.12.2021</div>
<svg style="left:1325px;top:12.2px" width="16" height="16" viewBox="0 0 16 16"><path d="M0 0H16V12.5H10.5L7.5 16V12.5H0z" fill="#0a0a0a"/><path d="M3 3.3H13M3 6.1H13M3 8.9H10" stroke="#ece2d9" stroke-width="1.1"/></svg>
<div class="abs" style="left:1332.5px;top:18.5px;width:16.5px;height:16.5px;border-radius:50%;background:#d6d6d6;border:1px solid #8e8e8e"></div>
<div class="t" style="left:1337.4px;top:21.3px;font-size:12px;color:#111;">6</div>
<div class="abs" style="left:1362px;top:0;width:1px;height:40px;background:#a8a19a"></div>
</div>
</body>
</html>
